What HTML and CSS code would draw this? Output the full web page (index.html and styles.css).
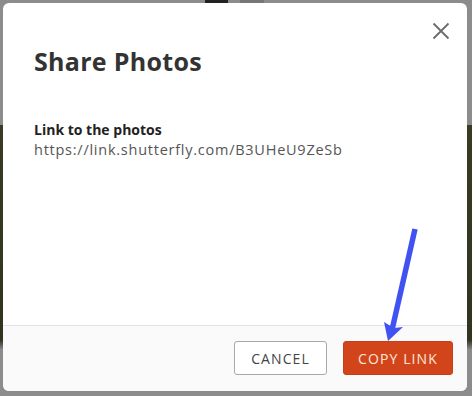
FILE: index.html
```html
<!DOCTYPE html>
<html>
<head>
<meta charset="utf-8">
<link rel="stylesheet" href="styles.css">
</head>
<body>
<div class="backdrop">
  <div class="topbits"><span class="bit dark"></span><span class="bit light"></span></div>
  <div class="modal">
    <div class="header">
      <h1 class="title">Share Photos</h1>
      <button class="close" aria-label="Close">
        <svg width="18" height="18" viewBox="0 0 18 18"><path d="M1.5 1.5 L16.5 16.5 M16.5 1.5 L1.5 16.5" stroke="#6b6b6b" stroke-width="1.8" fill="none"/></svg>
      </button>
    </div>
    <div class="content">
      <div class="label">Link to the photos</div>
      <div class="url">https://link.shutterfly.com/B3UHeU9ZeSb</div>
    </div>
    <div class="footer">
      <button class="btn cancel">CANCEL</button>
      <button class="btn copy">COPY LINK</button>
    </div>
  </div>
  <svg class="arrow" width="472" height="396" viewBox="0 0 472 396">
    <line x1="415" y1="229" x2="392" y2="330" stroke="#4152f2" stroke-width="5.5"/>
    <path d="M384 322 L388 341 L403 327 L394 328 Z" fill="#4152f2"/>
  </svg>
</div>
</body>
</html>
```
FILE: styles.css
```css
html, body {
  margin: 0;
  padding: 0;
}
body {
  width: 472px;
  height: 396px;
  overflow: hidden;
  font-family: "Open Sans", "Noto Sans", sans-serif;
}
.backdrop {
  position: relative;
  width: 472px;
  height: 396px;
  box-sizing: border-box;
  padding: 3px 5px 5px 3px;
  background: linear-gradient(to bottom, #8c8c8c 0, #8c8c8c 125px, #3b3a22 125px, #2f3520 340px, #8c8c8c 350px, #8c8c8c 100%);
}
.topbits {
  position: absolute;
  top: 0;
  left: 205px;
  display: flex;
  gap: 12px;
}
.bit { display: block; height: 3px; }
.bit.dark { width: 23px; background: #222; }
.bit.light { width: 24px; background: #777; }
.modal {
  background: #fff;
  border-radius: 6px;
  height: 388px;
  display: flex;
  flex-direction: column;
  overflow: hidden;
}
.header {
  display: flex;
  justify-content: space-between;
  align-items: flex-start;
  padding: 0 17px 0 31px;
}
.title {
  margin: 41px 0 0;
  font-size: 25px;
  font-weight: 700;
  color: #333;
  letter-spacing: 0.3px;
  line-height: 34px;
}
.close {
  margin-top: 19px;
  border: 0;
  background: none;
  padding: 0;
  width: 18px;
  height: 18px;
  display: flex;
}
.content {
  padding: 42px 31px 0;
  flex: 1;
}
.label {
  font-size: 14px;
  font-weight: 700;
  color: #222;
  line-height: 20px;
}
.url {
  font-size: 14.5px;
  color: #555;
  line-height: 20px;
  letter-spacing: 0.75px;
}
.footer {
  border-top: 1px solid #e3e3e3;
  background: #fafafa;
  display: flex;
  justify-content: flex-end;
  gap: 16px;
  padding: 15px 14px 16px;
}
.btn {
  height: 34px;
  border-radius: 3px;
  font-family: "Open Sans", "Noto Sans", sans-serif;
  font-size: 14px;
  letter-spacing: 1.1px;
  padding: 0;
}
.cancel {
  width: 93px;
  background: #fff;
  border: 1px solid #a8a8a8;
  color: #444;
}
.copy {
  width: 110px;
  background: #d2451a;
  border: 1px solid #c63f16;
  color: #fde6dc;
}
.arrow {
  position: absolute;
  top: 0;
  left: 0;
  pointer-events: none;
}
```
